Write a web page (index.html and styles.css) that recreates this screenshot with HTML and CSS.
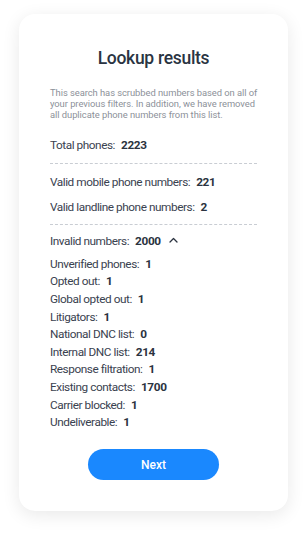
FILE: index.html
```html
<!DOCTYPE html>
<html>
<head>
<meta charset="utf-8">
<link rel="stylesheet" href="styles.css">
</head>
<body>
<div class="page">
  <div class="card">
    <h1 class="title">Lookup results</h1>
    <p class="desc">This search has scrubbed numbers based on all of your previous filters. In addition, we have removed all duplicate phone numbers from this list.</p>
    <div class="row total"><span class="label">Total phones:</span><b class="val">2223</b></div>
    <div class="dash"></div>
    <div class="row mobile"><span class="label">Valid mobile phone numbers:</span><b class="val">221</b></div>
    <div class="row landline"><span class="label">Valid landline phone numbers:</span><b class="val">2</b></div>
    <div class="dash second"></div>
    <div class="row invalid"><span class="label">Invalid numbers:</span><b class="val">2000</b>
      <svg class="chev" width="9" height="6" viewBox="0 0 9 6"><path d="M1 5 L4.5 1.5 L8 5" fill="none" stroke="#2b3340" stroke-width="1.3" stroke-linecap="round" stroke-linejoin="round"/></svg>
    </div>
    <div class="list">
      <div class="item"><span class="label">Unverified phones:</span><b class="val">1</b></div>
      <div class="item"><span class="label">Opted out:</span><b class="val">1</b></div>
      <div class="item"><span class="label">Global opted out:</span><b class="val">1</b></div>
      <div class="item"><span class="label">Litigators:</span><b class="val">1</b></div>
      <div class="item"><span class="label">National DNC list:</span><b class="val">0</b></div>
      <div class="item"><span class="label">Internal DNC list:</span><b class="val">214</b></div>
      <div class="item"><span class="label">Response filtration:</span><b class="val">1</b></div>
      <div class="item"><span class="label">Existing contacts:</span><b class="val">1700</b></div>
      <div class="item"><span class="label">Carrier blocked:</span><b class="val">1</b></div>
      <div class="item"><span class="label">Undeliverable:</span><b class="val">1</b></div>
    </div>
    <div class="actions"><button class="btn">Next</button></div>
  </div>
</div>
</body>
</html>
```
FILE: styles.css
```css
* { box-sizing: border-box; }
html, body { margin: 0; padding: 0; background: #ffffff; }
body { font-family: Roboto, "Liberation Sans", sans-serif; width: 306px; height: 534px; overflow: hidden; }
.page { padding: 14px 18px 0 19px; }
.card {
  width: 269px;
  height: 497px;
  background: #fff;
  border-radius: 16px;
  box-shadow: 0 4px 18px rgba(0, 0, 0, 0.09);
  padding: 33px 31px 0 31px;
}
.title {
  margin: 0;
  font-size: 17.5px;
  line-height: 22px;
  font-weight: 500;
  letter-spacing: -0.3px;
  color: #2a3442;
  text-align: center;
}
.desc {
  margin: 18px -2px 0 0;
  font-size: 9.4px;
  line-height: 11.2px;
  letter-spacing: -0.05px;
  color: #8c9199;
}
.row, .item {
  display: flex;
  align-items: center;
  font-size: 11.8px;
  letter-spacing: -0.45px;
  color: #3a4250;
}
.row { height: 18px; }
.item { height: 17.6px; }
.label { margin-right: 6px; }
.val { font-weight: 700; color: #2b3340; letter-spacing: -0.35px; }
.total { margin-top: 15.5px; }
.dash { margin-top: 9px; border-top: 1px dashed #c9cdd3; height: 0; }
.mobile { margin-top: 9px; }
.landline { margin-top: 6.6px; }
.dash.second { margin-top: 8.3px; }
.invalid { margin-top: 7px; }
.chev { margin-left: 8px; margin-top: -2px; }
.list { margin-top: 5px; }
.actions { display: flex; justify-content: center; margin-top: 18.5px; }
.btn {
  width: 131px;
  height: 30.5px;
  border: none;
  border-radius: 16px;
  background: #1a88fe;
  color: #fff;
  font-family: Roboto, "Liberation Sans", sans-serif;
  font-size: 12px;
  font-weight: 500;
}
```
